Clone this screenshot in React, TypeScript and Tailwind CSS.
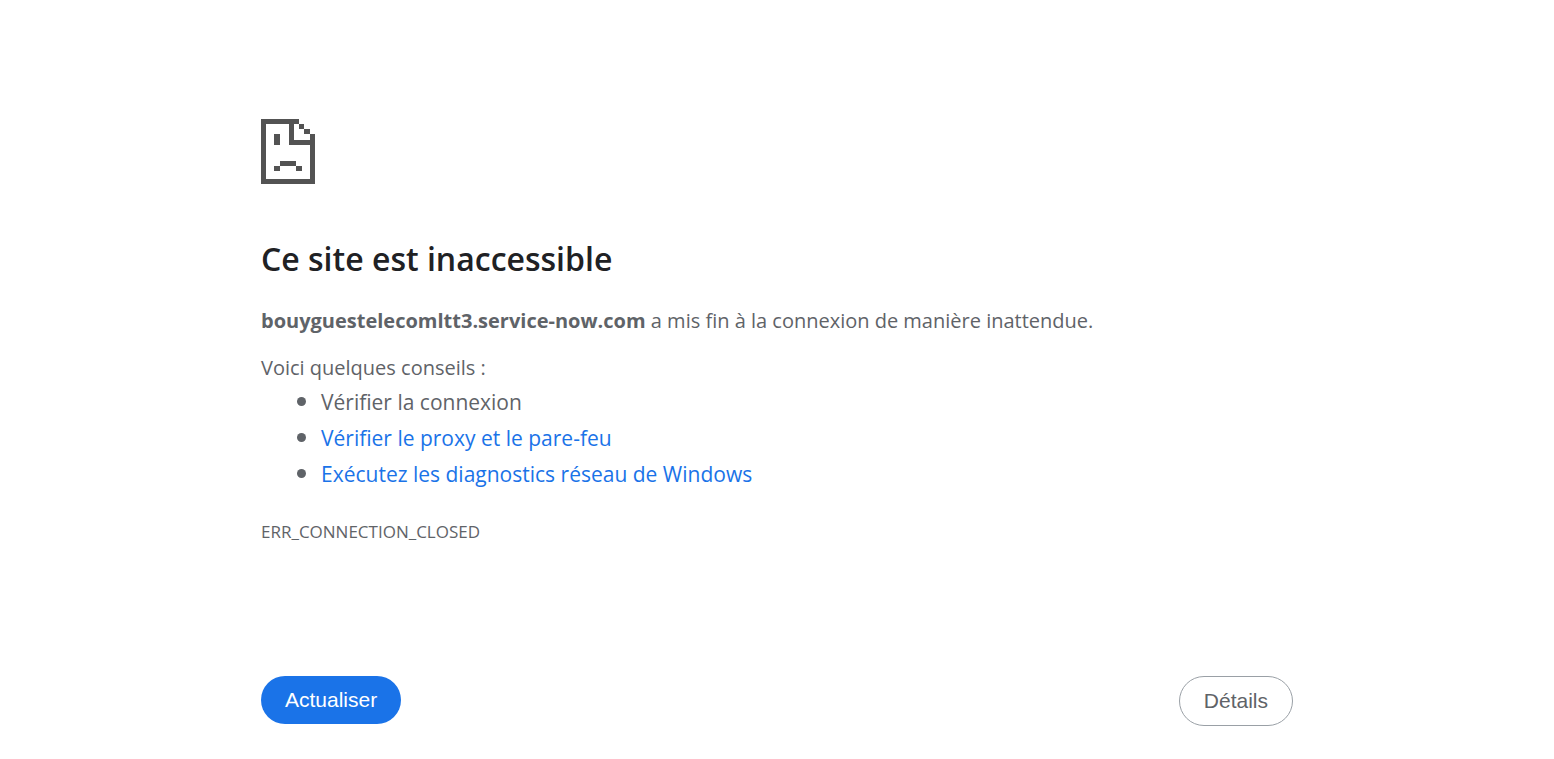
function SadPageIcon() {
  return (
    <svg
      width="54"
      height="65"
      viewBox="0 0 54 65"
      fill="#535353"
      shapeRendering="crispEdges"
      aria-hidden="true"
    >
      <path d="M0 0H38V5H33V21H49V15H54V65H0ZM5 5V60H49V26H28V5Z" fillRule="evenodd" />
      <path d="M38 5H43V10H38ZM43 10H49V15H43Z" />
      <path d="M13 15H19V26H13Z" />
      <path d="M19 42H35V47H19ZM13 47H19V52H13ZM35 47H41V52H35Z" />
    </svg>
  );
}

const linkClass = "text-[#1a73e8] hover:underline";

export default function App() {
  return (
    <main className="mx-auto max-w-[1080px] px-6 pt-[119px] pb-8 font-['Open_Sans','Noto_Sans',sans-serif] text-xl text-[#5f6368]">
      <SadPageIcon />
      <h1 className="mt-12 text-[32px] leading-[54px] font-semibold text-[#202124]">
        Ce site est inaccessible
      </h1>
      <p className="mt-[19px] leading-8">
        <strong className="font-bold">bouyguestelecomltt3.service-now.com</strong> a mis fin à la
        connexion de manière inattendue.
      </p>
      <p className="mt-[15px] leading-8">Voici quelques conseils :</p>
      <ul className="list-disc pl-[60px] text-[21px] leading-9 marker:text-2xl">
        <li>Vérifier la connexion</li>
        <li>
          <a href="#proxy" className={linkClass}>Vérifier le proxy et le pare-feu</a>
        </li>
        <li>
          <a href="#diagnostics" className={linkClass}>Exécutez les diagnostics réseau de Windows</a>
        </li>
      </ul>
      <p className="mt-6 text-[17px] leading-8">ERR_CONNECTION_CLOSED</p>
      <div className="mt-32 flex items-start justify-between font-['Liberation_Sans',Arial,sans-serif] text-[21px]">
        <button type="button" className="h-12 rounded-full bg-[#1a73e8] px-6 text-white">
          Actualiser
        </button>
        <button
          type="button"
          className="h-[50px] rounded-full border border-[#9aa0a6] bg-white px-6 text-[#5f6368]"
        >
          Détails
        </button>
      </div>
    </main>
  );
}
